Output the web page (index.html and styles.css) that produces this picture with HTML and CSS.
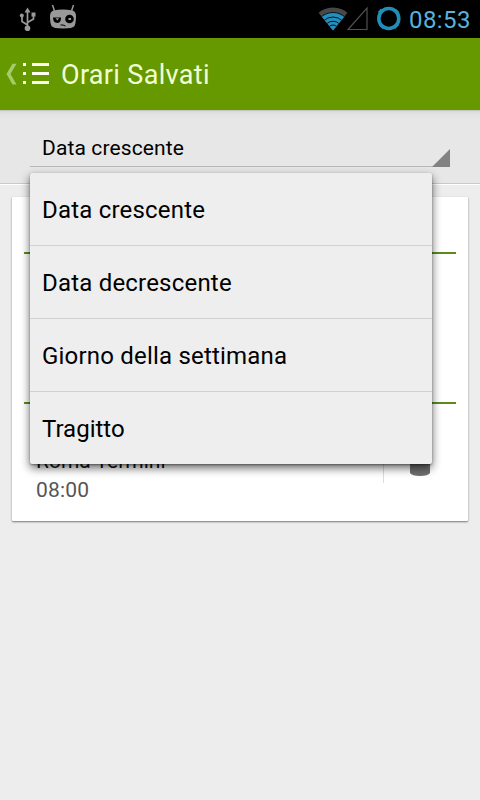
FILE: index.html
```html
<!DOCTYPE html>
<html lang="it">
<head>
<meta charset="utf-8">
<title>Orari Salvati</title>
<link rel="stylesheet" href="styles.css">
</head>
<body>
<div class="screen">
  <header class="status">
    <svg class="status-left" width="90" height="38" viewBox="0 0 90 38">
      <path d="M27.500 28V11M27.500 25L22 21.500V17M27.500 22.500L33.500 19V15" fill="none" stroke="#999" stroke-width="1.700"/>
      <g fill="#999">
        <path d="M27.500 7.500L30.500 12.500H24.500Z"/>
        <circle cx="27.500" cy="28.200" r="2.800"/>
        <circle cx="21.800" cy="15.500" r="2"/>
        <rect x="31.500" y="12.500" width="4" height="4"/>
        <path d="M53.500 10.500Q63 8.500 72.500 10.500Q76 11.500 76 16Q76 23 74.500 26Q73 28.500 63 28.500Q53 28.500 51.500 26Q50 23 50 16Q50 11.500 53.500 10.500Z"/>
      </g>
      <path d="M54.500 11L52.500 5M71.500 11L73.500 5" stroke="#999" stroke-width="1.500"/>
      <path d="M53 17.500H61Q61 23 57 23Q53 22.500 53 17.500Z"/>
      <circle cx="69.500" cy="19" r="4.300"/>
      <path d="M55.500 18.300H59L57.500 20.500Z M68.500 18h2.500v2h-2.500z" fill="#999"/>
      <path d="M60.500 25Q63 24.500 65.500 26" fill="none" stroke="#000" stroke-width="1"/>
    </svg>
    <svg class="status-right" width="90" height="38" viewBox="315 0 90 38">
      <defs><clipPath id="fan"><path d="M333 30.500L317.500 11.500Q333 2 348.500 11.500Z"/></clipPath></defs>
      <g clip-path="url(#fan)">
        <circle cx="333" cy="30.500" r="23" fill="#484848"/>
        <circle cx="333" cy="30.500" r="18" fill="#248fbd"/>
        <g fill="none" stroke="#06141b" stroke-width="1"><circle cx="333" cy="30.500" r="18"/><circle cx="333" cy="30.500" r="13.500"/><circle cx="333" cy="30.500" r="9.300"/><circle cx="333" cy="30.500" r="5.500"/></g>
      </g>
      <path d="M348 29.500L367 8V29.500Z" fill="none" stroke="#505050" stroke-width="1.200"/>
      <circle cx="388.800" cy="18.500" r="10" fill="none" stroke="#218eb9" stroke-width="3.600"/>
      <path d="M380 24.500L384 28M379 13L382 9.500M395 10L398 13M394 28L398 24" stroke="#218eb9" stroke-width="3"/>
    </svg>
    <span class="clock">08:53</span>
  </header>

  <div class="action-bar">
    <svg width="56" height="72" viewBox="0 38 56 72">
      <path d="M12.500 63.700H16.500L10.500 74L16.500 84.500H12.500L6.500 74Z" fill="#a6cb6d"/>
      <g fill="#fbfff3">
        <rect x="23" y="63" width="3" height="3"/><rect x="32" y="63" width="17" height="3"/>
        <rect x="23" y="72" width="3" height="3"/><rect x="32" y="72" width="17" height="3"/>
        <rect x="23" y="81" width="3" height="3"/><rect x="32" y="81" width="17" height="3"/>
      </g>
    </svg>
    <h1 class="title">Orari Salvati</h1>
  </div>

  <section class="filter">
    <div class="spinner">
      <span>Data crescente</span>
      <svg class="corner" width="18" height="18" viewBox="0 0 18 18"><path d="M18 0V18H0Z" fill="#828282"/></svg>
    </div>
    <ul class="menu">
      <li>Data crescente</li>
      <li>Data decrescente</li>
      <li>Giorno della settimana</li>
      <li>Tragitto</li>
    </ul>
  </section>

  <main class="card">
    <div class="heading"></div>
    <div class="entry"></div>
    <div class="entry-last">
      <div class="stop">
        <div class="station">Roma Termini</div>
        <div class="time">08:00</div>
      </div>
      <div class="separator"></div>
      <svg class="trash" width="24" height="34" viewBox="0 0 24 34"><path d="M2 4H22V31Q20 34 12 34Q4 34 2 31Z" fill="#707070"/></svg>
    </div>
  </main>
</div>
</body>
</html>
```

FILE: styles.css
```css
* { box-sizing: border-box; }
body { margin: 0; font-family: Roboto, "Liberation Sans", sans-serif; background: #ededed; }
.screen { width: 480px; height: 800px; overflow: hidden; background: #ededed; }
.status { display: flex; height: 38px; background: #000; }
.status-right { margin-left: 225px; }
.clock { margin-left: 4px; font-size: 24px; line-height: 40px; letter-spacing: 0.4px; color: #59b2dc; white-space: nowrap; }
.action-bar { display: flex; height: 72px; background: #690; }
.title { margin: 0 0 0 5px; font-size: 27px; font-weight: 400; line-height: 75px; letter-spacing: 0.33px; color: #f0ffd5; white-space: nowrap; }
.filter {
  position: relative;
  height: 75px;
  padding: 12px 30px 0;
  background: linear-gradient(#b5b8b0 0, #d6d6d6 1px, #e1e1e1 3px, #e7e7e7 9px);
  border-bottom: 1px solid #fff;
  box-shadow: inset 0 -1px #c9c9c9;
}
.spinner {
  display: flex;
  justify-content: space-between;
  align-items: flex-end;
  height: 45px;
  padding-left: 12px;
  border-bottom: 1px solid #b9b9b9;
  font-size: 21px;
  line-height: 36px;
  letter-spacing: 0.12px;
  color: #000;
}
.corner { display: block; margin-bottom: -1px; }
.menu {
  position: absolute;
  left: 30px;
  top: 63px;
  width: 402px;
  height: 291px;
  margin: 0;
  padding: 0;
  list-style: none;
  background: #eee;
  border-radius: 2px;
  box-shadow: 0 4px 10px rgba(0, 0, 0, .6), 0 1px 2px rgba(0, 0, 0, .35);
  z-index: 2;
}
.menu li { height: 73px; padding-left: 12px; border-bottom: 1px solid #d1d1d1; font-size: 24px; line-height: 74px; letter-spacing: 0.2px; color: #000; }
.menu li:last-child { border-bottom: 0; letter-spacing: 0; }
.card {
  height: 324px;
  margin: 12px 12px 0;
  padding: 0 12px;
  background: #fff;
  border-radius: 1px;
  box-shadow: 0 1px 2px rgba(0, 0, 0, .5);
}
.heading { height: 57px; border-bottom: 2px solid #5c8a1f; }
.entry { height: 150px; border-bottom: 2px solid #5c8a1f; }
.entry-last { display: flex; align-items: flex-start; padding: 18px 24px 0 12px; }
.stop { flex: none; width: 347px; padding-top: 25px; }
.station { font-size: 21px; line-height: 28px; color: #111; }
.time { font-size: 21px; line-height: 30px; letter-spacing: 0.2px; color: #555; }
.separator { width: 1px; height: 61px; background: #ddd; }
.trash { display: block; margin: 20px 0 0 24px; }
```
